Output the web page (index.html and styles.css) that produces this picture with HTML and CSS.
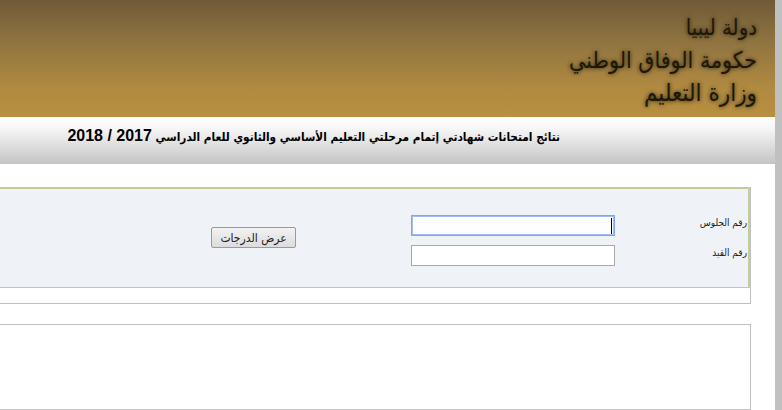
FILE: index.html
```html
<!DOCTYPE html>
<html lang="ar" dir="rtl">
<head>
  <meta charset="UTF-8" />
  <title>نتائج الامتحانات</title>
  <link rel="stylesheet" href="styles.css">
</head>
<body>
  <div class="side-strip"></div>

  <div class="page">
    <div class="banner">
      <div class="banner-text">
        <div class="line-1">دولة ليبيا</div>
        <div class="line-2">حكومة الوفاق الوطني</div>
        <div class="line-3">وزارة التعليم</div>
      </div>
    </div>

    <div class="title-bar">
      <h1>نتائج امتحانات شهادتي إتمام مرحلتي التعليم الأساسي والثانوي للعام الدراسي <span class="years" dir="ltr">2018 / 2017</span></h1>
    </div>

    <div class="outer-box">
      <div class="form-panel">
        <div class="fields">
          <div class="row">
            <label for="seat">رقم الجلوس</label>
            <div class="input-wrap">
              <input type="text" id="seat" class="focused" />
              <span class="caret"></span>
            </div>
          </div>
          <div class="row">
            <label for="reg">رقم القيد</label>
            <div class="input-wrap">
              <input type="text" id="reg" />
            </div>
          </div>
        </div>
        <button class="show-btn">عرض الدرجات</button>
      </div>
    </div>

    <div class="results-box"></div>
  </div>
</body>
</html>
```

FILE: styles.css
```css
* {
  margin: 0;
  padding: 0;
  box-sizing: border-box;
  font-family: 'DejaVu Sans Condensed', 'DejaVu Sans', sans-serif;
}

html, body {
  height: 410px;
  overflow: hidden;
}

body {
  background: white;
  display: flex;
  flex-direction: row;
  color: black;
}

.side-strip {
  width: 7px;
  height: 410px;
  background: #c0c0c0;
  flex-shrink: 0;
}

.page {
  flex: 1;
  min-width: 0;
}

.banner {
  height: 117px;
  background: linear-gradient(to bottom, #6f5a38, #8f7440 35%, #b08a40 75%, #b98f40);
  padding: 13px 18px 0 0;
  display: flex;
}

.banner-text {
  color: #1d1808;
  text-shadow: 0 0 4px rgba(30, 22, 8, 0.9);
}

.line-1 {
  font-size: 22px;
  line-height: 30px;
}

.line-2 {
  font-size: 23px;
  line-height: 34px;
}

.line-3 {
  font-size: 24px;
  line-height: 32px;
}

.title-bar {
  height: 47px;
  background: linear-gradient(to bottom, #ffffff, #f6f6f6 25%, #c4c4c4);
  padding: 10px 215px 0 0;
}

.title-bar h1 {
  font-size: 11.75px;
  line-height: 18px;
  font-weight: bold;
  white-space: nowrap;
}

.years {
  font-family: 'Liberation Sans', sans-serif;
  font-size: 16px;
  letter-spacing: 0.6px;
}

.outer-box {
  height: 117px;
  margin: 23px 24px 0 0;
  border: 1px solid #c0c0c0;
  border-left: none;
  border-top: none;
}

.form-panel {
  height: 101px;
  background: #eff3f8;
  border: 1px solid #c3cc9c;
  border-width: 2px 2px 1px 0;
  display: flex;
  align-items: flex-start;
  padding-top: 26px;
}

.fields {
  display: flex;
  flex-direction: column;
  gap: 9px;
}

.row {
  display: flex;
  align-items: flex-start;
}

.row label {
  width: 133px;
  padding-right: 1px;
  padding-top: 1px;
  font-size: 10px;
  line-height: 14px;
  color: #222;
}

.input-wrap {
  position: relative;
  display: flex;
}

input {
  width: 204px;
  height: 21px;
  border: 1px solid #a9a9a9;
  background: white;
  outline: none;
}

input.focused {
  border: 1px solid #7fa6ee;
  box-shadow: 0 0 0 1px #a0bdf0 inset;
}

.caret {
  position: absolute;
  top: 3px;
  right: 3px;
  width: 1px;
  height: 16px;
  background: black;
}

.show-btn {
  width: 85px;
  height: 21px;
  margin: 12px 115px 0 0;
  background: linear-gradient(to bottom, #f2f2f2, #dcdcdc);
  border: 1px solid #9a9a9a;
  border-radius: 2px;
  font-size: 12px;
  color: #222;
}

.results-box {
  height: 86px;
  margin: 20px 24px 0 0;
  border: 1px solid #c0c0c0;
  border-left: none;
}
```
